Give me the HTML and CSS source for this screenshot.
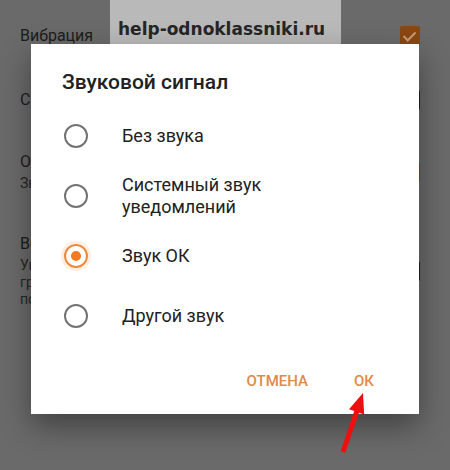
FILE: index.html
```html
<!DOCTYPE html>
<html lang="ru">
<head>
<meta charset="UTF-8" />
<meta name="viewport" content="width=device-width, initial-scale=1.0" />
<title>Звуковой сигнал</title>
<link rel="stylesheet" href="styles.css">
</head>
<body>
<div class="settings">
    <div class="setting first">
        <div class="setting-text"><div class="setting-title">Вибрация</div></div>
        <span class="check checked"></span>
    </div>
    <div class="setting second">
        <div class="setting-text"><div class="setting-title">Свет</div></div>
        <span class="check"></span>
    </div>
    <div class="setting third">
        <div class="setting-text">
            <div class="setting-title">Отклик</div>
            <div class="setting-sub">Звук</div>
        </div>
        <span class="check checked"></span>
    </div>
    <div class="setting fourth">
        <div class="setting-text">
            <div class="setting-title">Все</div>
            <div class="setting-sub">Уведом.</div>
            <div class="setting-sub">группы</div>
            <div class="setting-sub">посты</div>
        </div>
        <span class="check"></span>
    </div>
</div>

<div class="watermark">help-odnoklassniki.ru</div>

<div class="dialog">
    <div class="dialog-title">Звуковой сигнал</div>
    <div class="options">
        <label class="option"><span class="radio"></span><span class="option-label">Без звука</span></label>
        <label class="option"><span class="radio"></span><span class="option-label">Системный звук<br>уведомлений</span></label>
        <label class="option"><span class="radio selected"></span><span class="option-label">Звук ОК</span></label>
        <label class="option"><span class="radio"></span><span class="option-label">Другой звук</span></label>
    </div>
    <div class="actions">
        <button class="action">ОТМЕНА</button>
        <button class="action">ОК</button>
    </div>
</div>

<svg class="arrow" width="50" height="80" viewBox="330 385 50 80">
    <polygon fill="#ec1010" points="345.4,452.8 340.6,451.2 354.2,411.1 349,409.3 363,393 364.2,414.5 359,412.7"/>
</svg>
</body>
</html>
```

FILE: styles.css
```css
* {
    margin: 0;
    padding: 0;
    box-sizing: border-box;
}
body {
    width: 450px;
    height: 470px;
    overflow: hidden;
    background: #6a6a6a;
    font-family: Roboto, "Noto Sans", sans-serif;
    position: relative;
}
.settings {
    display: flex;
    flex-direction: column;
}
.setting {
    display: flex;
    align-items: center;
    justify-content: space-between;
    padding: 0 30px 0 20px;
    color: #1c1c1c;
}
.setting.first { height: 72px; padding-bottom: 1px; }
.setting.second { height: 56px; }
.setting.third { padding-top: 23px; padding-bottom: 29px; }
.setting.fourth { padding-top: 12px; }
.setting-title {
    font-size: 16px;
    line-height: 22px;
}
.setting-sub {
    font-size: 14px;
    line-height: 17px;
    color: #262626;
}
.setting-title + .setting-sub { margin-top: 2px; }
.check {
    width: 20px;
    height: 20px;
    border: 2px solid #1e1e1e;
    border-radius: 2px;
    position: relative;
}
.check.checked {
    background: #8a4812;
    border-color: #8a4812;
}
.check.checked::after {
    content: "";
    position: absolute;
    left: 4px;
    top: 1px;
    width: 5px;
    height: 10px;
    border: solid #c89a72;
    border-width: 0 2px 2px 0;
    transform: rotate(45deg);
}
.watermark {
    position: absolute;
    left: 110px;
    top: 0;
    width: 231px;
    height: 44px;
    background: #b9b9b9;
    color: #262626;
    font-family: "DejaVu Sans", sans-serif;
    font-weight: bold;
    font-size: 17px;
    padding: 19px 0 0 8px;
    line-height: 20px;
}
.dialog {
    position: absolute;
    left: 31px;
    top: 44px;
    width: 388px;
    height: 370px;
    background: #fff;
    box-shadow: 0 12px 28px rgba(0, 0, 0, 0.38);
    display: flex;
    flex-direction: column;
}
.dialog-title {
    padding: 26px 0 12px 31px;
    font-size: 21px;
    line-height: 24px;
    font-weight: 500;
    color: #212121;
}
.options {
    display: flex;
    flex-direction: column;
}
.option {
    display: flex;
    align-items: center;
    min-height: 60px;
    padding-left: 33px;
    gap: 34px;
}
.radio {
    width: 24px;
    height: 24px;
    border: 2.5px solid #737373;
    border-radius: 50%;
    display: flex;
    align-items: center;
    justify-content: center;
    flex: none;
}
.radio.selected {
    border-color: #ef8a3c;
    box-shadow: 0 0 0 3px rgba(243, 138, 60, 0.15);
}
.radio.selected::after {
    content: "";
    width: 10px;
    height: 10px;
    border-radius: 50%;
    background: #f37a20;
}
.option-label {
    font-size: 18px;
    line-height: 22px;
    color: #212121;
}
.actions {
    display: flex;
    justify-content: flex-end;
    gap: 46px;
    padding: 26px 45px 0 0;
}
.action {
    background: none;
    border: none;
    font-family: Roboto, sans-serif;
    font-size: 15px;
    font-weight: 500;
    line-height: 18px;
    color: #e08a48;
}
.arrow {
    position: absolute;
    left: 330px;
    top: 385px;
}
```
